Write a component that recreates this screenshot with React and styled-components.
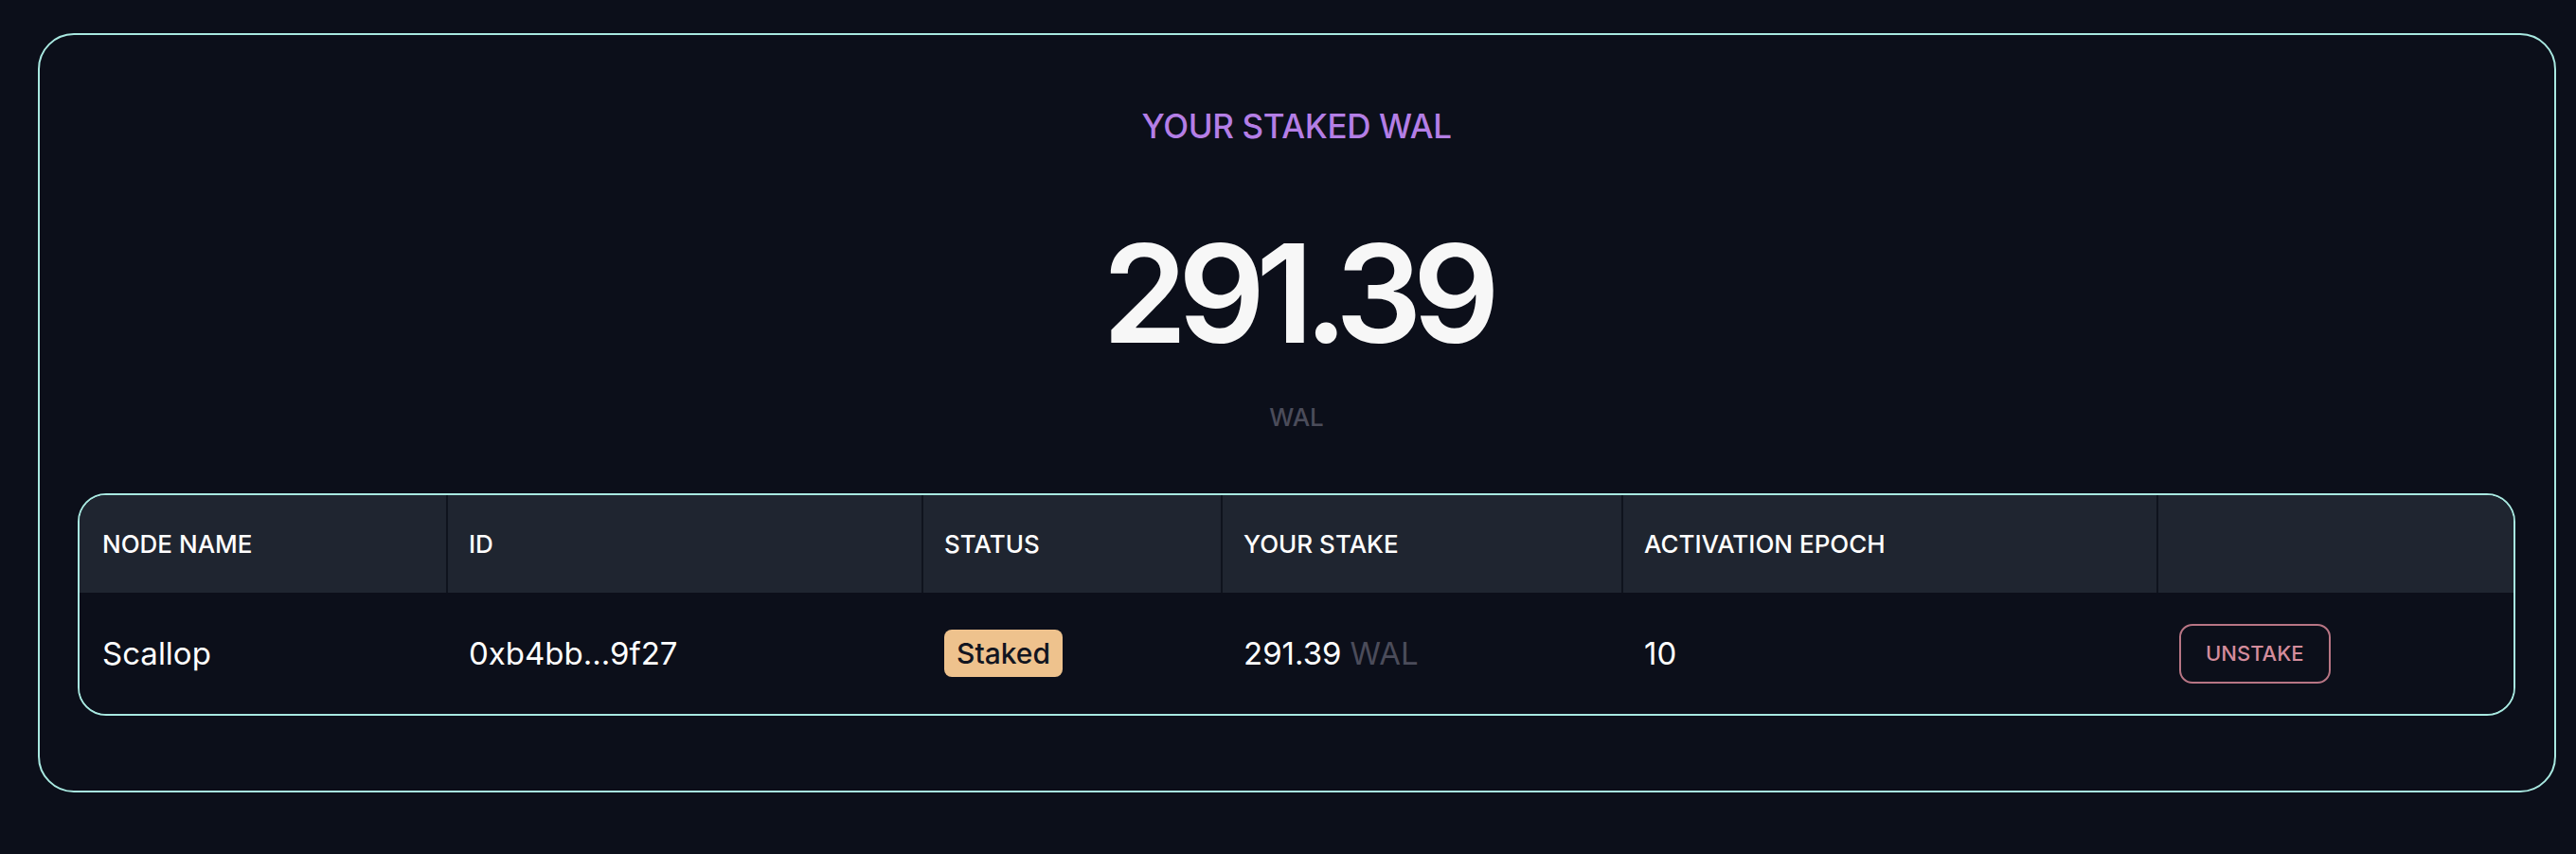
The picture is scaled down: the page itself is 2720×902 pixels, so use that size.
import React from "react";
import styled, { createGlobalStyle } from "styled-components";

const GlobalStyle = createGlobalStyle`
  body {
    margin: 0;
    background: #0c0f1a;
    font-family: Inter, "Noto Sans", sans-serif;
    color: #f7f7f7;
  }
`;

const Page = styled.div`
  padding: 35px 21px 0 40px;
`;

const Card = styled.section`
  border: 2px solid #a8e8e0;
  border-radius: 38px;
  padding: 79px 41px 79px 40px;
  display: flex;
  flex-direction: column;
  align-items: center;
`;

const Title = styled.h2`
  margin: 0;
  font-size: 35px;
  line-height: 35px;
  font-weight: 500;
  letter-spacing: -0.01em;
  color: #b47ee6;
`;

const Amount = styled.div`
  margin-top: 87px;
  font-size: 144px;
  line-height: 144px;
  font-weight: 600;
  letter-spacing: -0.068em;
  color: #f7f7f7;
`;

const Unit = styled.div`
  margin-top: 46px;
  font-size: 26px;
  line-height: 26px;
  font-weight: 500;
  color: #4b4c5a;
`;

const Table = styled.div`
  margin-top: 67px;
  align-self: stretch;
  border: 2px solid #a8e8e0;
  border-radius: 30px;
  overflow: hidden;
`;

const Row = styled.div`
  display: grid;
  grid-template-columns: 387fr 502fr 316fr 423fr 565fr 377fr;
  height: ${(p) => (p.$head ? "103px" : "128px")};
  background: ${(p) => (p.$head ? "#1f2530" : "#0c0f1a")};
`;

const HeadCell = styled.div`
  display: flex;
  align-items: center;
  padding: 0 24px;
  font-size: 26px;
  font-weight: 500;
  color: #ffffff;
  box-shadow: ${(p) => (p.$first ? "none" : "inset 2px 0 0 #0f131d")};
`;

const Cell = styled.div`
  display: flex;
  align-items: center;
  gap: 9px;
  padding: 0 24px;
  font-size: 33px;
  color: #ffffff;
`;

const Muted = styled.span`
  color: #4b4c5a;
`;

const Badge = styled.span`
  display: inline-flex;
  align-items: center;
  height: 50px;
  padding: 0 13px;
  border-radius: 8px;
  background: #eec28d;
  color: #121520;
  font-size: 30px;
  font-weight: 500;
`;

const UnstakeButton = styled.button`
  height: 63px;
  padding: 0 26px;
  border: 2px solid #b87584;
  border-radius: 14px;
  background: transparent;
  color: #d48c9c;
  font-family: inherit;
  font-size: 22px;
  font-weight: 500;
  cursor: pointer;
`;

const columns = ["NODE NAME", "ID", "STATUS", "YOUR STAKE", "ACTIVATION EPOCH", ""];

export default function App() {
  return (
    <>
      <GlobalStyle />
      <Page>
        <Card>
          <Title>YOUR STAKED WAL</Title>
          <Amount>291.39</Amount>
          <Unit>WAL</Unit>
          <Table>
            <Row $head>
              {columns.map((c, i) => (
                <HeadCell key={i} $first={i === 0}>
                  {c}
                </HeadCell>
              ))}
            </Row>
            <Row>
              <Cell>Scallop</Cell>
              <Cell>0xb4bb...9f27</Cell>
              <Cell>
                <Badge>Staked</Badge>
              </Cell>
              <Cell>
                291.39 <Muted>WAL</Muted>
              </Cell>
              <Cell>10</Cell>
              <Cell>
                <UnstakeButton>UNSTAKE</UnstakeButton>
              </Cell>
            </Row>
          </Table>
        </Card>
      </Page>
    </>
  );
}
